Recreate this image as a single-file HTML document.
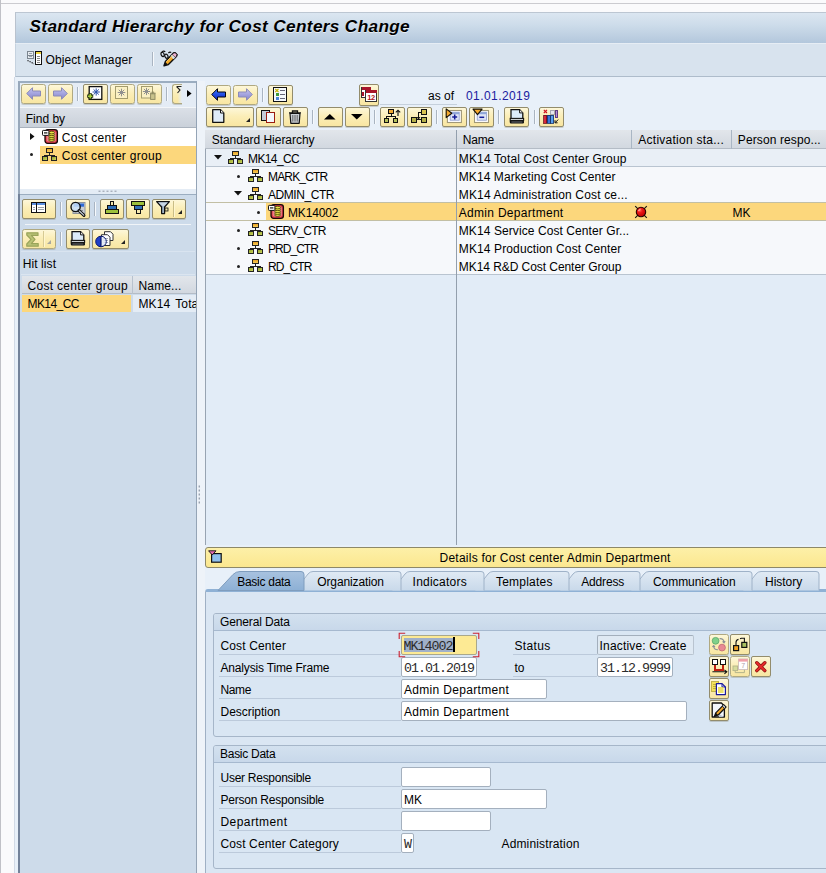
<!DOCTYPE html>
<html>
<head>
<meta charset="utf-8">
<title>Standard Hierarchy for Cost Centers Change</title>
<style>
*{box-sizing:border-box;margin:0;padding:0}
html,body{width:826px;height:873px;overflow:hidden;background:#fafafc}
body{position:relative;font-family:"Liberation Sans",sans-serif;font-size:12px;color:#000;line-height:18px}
.abs{position:absolute}
svg{position:absolute;overflow:visible}
#topline{left:0;top:3px;width:826px;height:1px;background:#cbcbd0}
#leftline{left:0;top:0;width:1px;height:873px;background:#c0c1c7}
#title{left:15px;top:12px;width:811px;height:31px;background:linear-gradient(#dbe6f1 0,#cddcea 40%,#b3c7dc 100%);border-top:1px solid #bcc6d2;border-left:1px solid #b9c2ce}
#title span{position:absolute;left:13.5px;top:3px;font:italic bold 17.2px "Liberation Sans",sans-serif;letter-spacing:.35px;line-height:20px;white-space:nowrap;text-shadow:0 1px 0 rgba(255,255,255,.6)}
#apptb{left:15px;top:43px;width:811px;height:34px;background:#d8e3ee;border-top:1px solid #e6edf4;border-left:1px solid #c5d2df;border-bottom:1px solid #aebccb}
#main{left:14px;top:77px;width:812px;height:796px;background:#e8f0f9;border-left:1px solid #d2dae6}
.btn{position:absolute;border:1px solid #b0a981;border-radius:2.5px;background:linear-gradient(#fdf7d9 0,#fbeeb8 45%,#f8e6a2 100%);box-shadow:0 1px 0 rgba(120,120,100,.3)}
.btn.on{border-color:#938c6c;border-radius:2px}
.sep{position:absolute;width:1px;height:14px;background:#a9b4c1;box-shadow:1px 0 0 #f6f9fc}
.t{position:absolute;white-space:nowrap}
.hl{background:#fcd77c}
.hdr{position:absolute;background:linear-gradient(#e2e6eb,#d2d8e0);border-bottom:1px solid #b4bcc6}
.lbl{position:absolute;white-space:nowrap;height:20px;line-height:23px;border-bottom:1px solid #bccadb;padding-left:1.5px}
.inp{position:absolute;height:20px;line-height:21px;border:1px solid #a4b0be;border-radius:2px;background:#fff;padding-left:2px;white-space:nowrap;overflow:hidden}
.mono{font-family:"Liberation Mono",monospace;font-size:13.3px;letter-spacing:-.98px;color:#2b2b2b}
.tab{position:absolute;top:573px;height:19px;line-height:19px;white-space:nowrap}
</style>
</head>
<body>
<svg width="0" height="0" style="left:0;top:0"><defs><linearGradient id="hgA" x1="0" y1="0" x2="0" y2="1"><stop offset="0" stop-color="#e89a1c"/><stop offset="1" stop-color="#f8d460"/></linearGradient><linearGradient id="hgB" x1="0" y1="0" x2="1" y2="1"><stop offset="0" stop-color="#8ea024"/><stop offset="1" stop-color="#d4dc68"/></linearGradient></defs></svg>
<div id="topline" class="abs"></div><div id="leftline" class="abs"></div>
<div id="title" class="abs"><span>Standard Hierarchy for Cost Centers Change</span></div>
<div id="apptb" class="abs"></div>
<div id="main" class="abs"></div>
<svg style="left:27px;top:51px" width="16" height="14" viewBox="0 0 16 14" ><g shape-rendering="crispEdges"><rect x="0.5" y="0.5" width="6" height="7" fill="#e6ebf0" stroke="#7c8690"/><path d="M0.5 4h6" stroke="#7c8690"/><path d="M2 2.2h3M2 5.8h3" stroke="#9aa3ad"/><rect x="8.5" y="0.5" width="6" height="13" fill="#fff" stroke="#111" stroke-width="1.2"/><rect x="9.2" y="1.2" width="4.6" height="2" fill="#f2d742"/><path d="M10 5.5h3M10 7.5h3M10 9.5h3M10 11.5h3" stroke="#888"/></g><path d="M0.5 9.5L7 12.8" stroke="#111" stroke-width="1.2" stroke-dasharray="1.2 1.1"/></svg>
<span class="t" style="left:45.5px;top:51px;letter-spacing:0.101px;">Object Manager</span>
<div class="sep" style="left:152px;top:52px"></div>
<svg style="left:160px;top:50px" width="18" height="17" viewBox="0 0 18 17" ><g fill="none" stroke="#111" stroke-width="1.2"><ellipse cx="2.6" cy="4.4" rx="1.5" ry="2.2" transform="rotate(-25 2.6 4.4)"/><ellipse cx="6.4" cy="6.2" rx="1.5" ry="2.2" transform="rotate(-25 6.4 6.2)"/><path d="M2 2.4C2.6 .8 4.2 .6 5.2 1.8M8.4 3C9.2 2.2 10.4 2 11.2 2.6"/></g><path d="M4 15.8L5.4 11.4L13.4 3L15.2 2.6L17 4.6L16.6 6.2L8.4 14.6Z" fill="#f4aa28" stroke="#111" stroke-width="1.4" stroke-linejoin="round"/><path d="M12 4.6L13.4 3L15.2 2.6L17 4.6L16.6 6.2L15.2 7.6Z" fill="#eab0d0" stroke="#111" stroke-width="1"/><path d="M10.4 6.2L12 4.6L15.2 7.6L13.6 9.2Z" fill="#d4dde6"/><path d="M6.4 11.8L12.6 5.6" stroke="#fbd070" stroke-width="1"/><path d="M4 15.8L5.2 12L8 14.6Z" fill="#111"/></svg>
<div class="abs" style="left:18px;top:81px;width:179px;height:792px;border:1px solid #94a4b6;border-left:2px solid #98a8bb;border-bottom:0;border-top:2px solid #9badc0;background:#e4ecf5"></div>
<div class="btn " style="left:21px;top:84px;width:25px;height:20px;"></div>
<div class="btn " style="left:48px;top:84px;width:25px;height:20px;"></div>
<svg style="left:25.5px;top:87.3px" width="15" height="13" viewBox="0 0 15 13" ><defs><linearGradient id="gl1" x1="0" y1="0" x2="0" y2="1"><stop offset="0" stop-color="#c4c4f0"/><stop offset="1" stop-color="#8484cc"/></linearGradient></defs><path d="M0.7 6.5 L6.5 0.7 L6.5 4 L14.5 4 L14.5 9 L6.5 9 L6.5 12.3 Z" fill="url(#gl1)" stroke="#8a8ab8" stroke-width="1" stroke-linejoin="round"/></svg>
<svg style="left:52.5px;top:87.3px" width="15" height="13" viewBox="0 0 15 13" ><defs><linearGradient id="gl2" x1="0" y1="0" x2="0" y2="1"><stop offset="0" stop-color="#c4c4f0"/><stop offset="1" stop-color="#8484cc"/></linearGradient></defs><path d="M14.3 6.5 L8.5 0.7 L8.5 4 L0.5 4 L0.5 9 L8.5 9 L8.5 12.3 Z" fill="url(#gl2)" stroke="#8a8ab8" stroke-width="1" stroke-linejoin="round"/></svg>
<div class="sep" style="left:77px;top:87px"></div>
<div class="btn on" style="left:83px;top:84px;width:25px;height:20px;"></div>
<div class="btn " style="left:110px;top:84px;width:25px;height:20px;"></div>
<div class="btn " style="left:137px;top:84px;width:25px;height:20px;"></div>
<div class="sep" style="left:166px;top:87px"></div>
<div class="btn " style="left:172px;top:84px;width:10px;height:20px;border-right:0;border-radius:3px 0 0 3px;background:linear-gradient(90deg,rgba(255,255,255,0) 50%,#e4ecf5 100%),linear-gradient(#fdf7d9 0,#fbeeb8 45%,#f8e6a2 100%)"></div>
<svg style="left:176px;top:86px" width="6" height="8" viewBox="0 0 6 8" ><path d="M0.5 0.5h5M0.5 0.5L4 4L1.5 7" fill="none" stroke="#222" stroke-width="1.1"/></svg>
<svg style="left:187px;top:90.3px" width="4.6" height="7" viewBox="0 0 4.6 7" ><path d="M0 0L4.6 3.5L0 7Z" fill="#000"/></svg>
<svg style="left:87px;top:86px" width="16" height="14" viewBox="0 0 16 14" ><rect x="2.2" y="0.6" width="12.6" height="12.8" fill="#fff" stroke="#111" stroke-width="1.3"/><path d="M9.2 2.4V9.6M5.6 6H12.799999999999999M6.607999999999999 3.408L11.792 8.592M11.792 3.408L6.607999999999999 8.592" stroke="#2a4fa8" stroke-width="1" fill="none"/><path d="M3.2 7.2V13.2M0.2 10.2H6.2" stroke="#1c2a08" stroke-width="3.2"/><path d="M3.2 8V12.4M1 10.2H5.4" stroke="#a6cf3a" stroke-width="1.5"/></svg>
<svg style="left:115px;top:86px" width="13" height="13" viewBox="0 0 13 13" ><rect x="0.5" y="0.5" width="12" height="12" fill="#fbf1c4" stroke="#a39c6e" stroke-width="1"/><path d="M6.5 2.7V10.3M2.7 6.5H10.3M3.7640000000000002 3.7640000000000002L9.236 9.236M9.236 3.7640000000000002L3.7640000000000002 9.236" stroke="#8f8f8f" stroke-width="1" fill="none"/></svg>
<svg style="left:141px;top:86px" width="15" height="14" viewBox="0 0 15 14" ><rect x="0.5" y="0.5" width="11" height="11.5" fill="#fbf1c4" stroke="#a39c6e" stroke-width="1"/><path d="M5.5 1.9V9.1M1.9 5.5H9.1M2.908 2.908L8.092 8.092M8.092 2.908L2.908 8.092" stroke="#8f8f8f" stroke-width="1" fill="none"/><path d="M9 7.2h5.6M10.5 6.2h2.6" stroke="#8a875f" stroke-width="1"/><rect x="9.6" y="7.8" width="4.4" height="5.6" fill="#c9c38c" stroke="#8a875f" stroke-width=".9"/></svg>
<div class="abs" style="left:20px;top:107px;width:176px;height:1px;background:#f3f6f9"></div>
<div class="hdr" style="left:20px;top:108px;width:176px;height:20px;background:linear-gradient(#dbe0e7,#cad1da);border-bottom:1px solid #a9b2bd"></div>
<span class="t" style="left:25.8px;top:110px;letter-spacing:-0.010px;">Find by</span>
<div class="abs" style="left:20px;top:128px;width:176px;height:61px;background:#fff"></div>
<div class="abs hl" style="left:40px;top:146px;width:156px;height:18px;"></div>
<svg style="left:29.8px;top:133px" width="4.5" height="7" viewBox="0 0 4.5 7" ><path d="M0 0L4.5 3.5L0 7Z" fill="#111"/></svg>
<svg style="left:42px;top:129px" width="16" height="15" viewBox="0 0 16 15" ><rect x="3" y="0.7" width="12.4" height="13.6" rx="2.6" fill="#e03a48" stroke="#1a0808" stroke-width="1.3"/><rect x="4.6" y="2.4" width="9.2" height="10.2" rx="1.6" fill="#f7b0b8" opacity=".6"/><g fill="#ece54a" stroke="#4a4000" stroke-width=".8"><ellipse cx="9.6" cy="11" rx="2.9" ry="1.3"/><ellipse cx="9.6" cy="9.1" rx="2.9" ry="1.3"/><ellipse cx="9.6" cy="7.2" rx="2.9" ry="1.3"/><ellipse cx="9.6" cy="5.3" rx="2.9" ry="1.3"/><ellipse cx="9.6" cy="3.6" rx="2.9" ry="1.3"/></g><rect x="0.5" y="1.4" width="6.4" height="5" rx=".8" fill="#fff" stroke="#111" stroke-width="1"/><path d="M2 3.9h3.4" stroke="#111" stroke-width="1.2"/></svg>
<span class="t" style="left:61.7px;top:129px;letter-spacing:0.314px;">Cost center</span>
<svg style="left:30px;top:153px" width="3" height="3" viewBox="0 0 3 3" ><circle cx="1.5" cy="1.5" r="1.5" fill="#222"/></svg>
<svg style="left:42px;top:147.6px" width="15" height="13" viewBox="0 0 15 13" ><g shape-rendering="crispEdges"><path d="M7.5 4v3M2.5 9V7h10v2" fill="none" stroke="#222"/><rect x="4.5" y="0.5" width="6" height="4" fill="url(#hgA)" stroke="#222"/><rect x="0.5" y="8.5" width="5" height="4" fill="url(#hgB)" stroke="#222"/><rect x="9.5" y="8.5" width="5" height="4" fill="url(#hgB)" stroke="#222"/></g></svg>
<span class="t" style="left:61.7px;top:147px;letter-spacing:0.282px;">Cost center group</span>
<svg style="left:98px;top:190px" width="20" height="3" viewBox="0 0 20 3" ><rect x="0.5" y="0.6" width="2" height="1.3" fill="#a2aab6"/><rect x="4.5" y="0.6" width="2" height="1.3" fill="#a2aab6"/><rect x="8.5" y="0.6" width="2" height="1.3" fill="#a2aab6"/><rect x="12.5" y="0.6" width="2" height="1.3" fill="#a2aab6"/><rect x="16.5" y="0.6" width="2" height="1.3" fill="#a2aab6"/></svg>
<div class="abs" style="left:18px;top:194px;width:2px;height:679px;background:#73829a"></div>
<div class="abs" style="left:20px;top:194px;width:176px;height:679px;background:#cddbea;border-top:1px solid #9badc0"></div>
<div class="abs" style="left:21px;top:251px;width:174px;height:1px;background:#d9e4f0"></div>
<div class="abs" style="left:21px;top:274px;width:174px;height:1px;background:#dbe5f0"></div>
<div class="btn on" style="left:22px;top:199px;width:34px;height:20px;"></div>
<div class="sep" style="left:60px;top:202px"></div>
<div class="btn on" style="left:66px;top:199px;width:24px;height:20px;"></div>
<div class="sep" style="left:94px;top:202px"></div>
<div class="btn on" style="left:100px;top:199px;width:24px;height:20px;"></div>
<div class="btn on" style="left:126px;top:199px;width:24px;height:20px;"></div>
<div class="btn on" style="left:152px;top:199px;width:34px;height:20px;"></div>
<div class="abs" style="left:25px;top:224px;width:166px;height:1px;background:#f0f4f8"></div>
<div class="btn " style="left:22px;top:229px;width:34px;height:20px;"></div>
<div class="sep" style="left:60px;top:232px"></div>
<div class="btn on" style="left:66px;top:229px;width:24px;height:20px;"></div>
<div class="btn on" style="left:92px;top:229px;width:37px;height:20px;"></div>
<svg style="left:31px;top:202px" width="15" height="11" viewBox="0 0 15 11" ><g shape-rendering="crispEdges"><rect x="0.5" y="0.5" width="14" height="10" fill="#fff" stroke="#111" stroke-width="1.2"/><rect x="1.2" y="1.2" width="12.6" height="1.8" fill="#5b8fe0"/><path d="M5.5 1v9" stroke="#111"/><path d="M2 5.5h2M2 7.5h2M7 5.5h6M7 7.5h6" stroke="#9aa0a8"/></g></svg>
<svg style="left:69px;top:201px" width="18" height="16" viewBox="0 0 18 16" ><rect x="4" y="1.5" width="12" height="11" fill="#c9ced4" stroke="#8c939b" stroke-width="1"/><rect x="5" y="2.5" width="10" height="3.2" fill="#2d6ad8"/><path d="M5 9.5h9" stroke="#8c939b"/><circle cx="6.6" cy="6" r="4.6" fill="#cfe6fb" fill-opacity=".8" stroke="#111" stroke-width="1.4"/><path d="M10 9.6L15 14.4" stroke="#111" stroke-width="3" stroke-linecap="round"/><path d="M10.4 10L14.8 14.2" stroke="#c8d2dc" stroke-width="1.1" stroke-linecap="round"/></svg>
<svg style="left:105px;top:201px" width="14" height="13" viewBox="0 0 14 13" ><g shape-rendering="crispEdges" stroke="#111" stroke-width="1"><rect x="5.5" y="0.5" width="3" height="4" fill="#f6e9b0"/><rect x="2.5" y="4.5" width="9" height="4" fill="#2f6fb8"/><rect x="0.5" y="8.5" width="13" height="4" fill="#9cc03c"/></g></svg>
<svg style="left:131px;top:201px" width="14" height="13" viewBox="0 0 14 13" ><g shape-rendering="crispEdges" stroke="#111" stroke-width="1"><rect x="0.5" y="0.5" width="13" height="4" fill="#9cc03c"/><rect x="3.5" y="4.5" width="8" height="4" fill="#2f6fb8"/><rect x="5.5" y="8.5" width="4" height="4" fill="#f6e9b0"/></g></svg>
<svg style="left:156px;top:201px" width="15" height="14" viewBox="0 0 15 14" ><path d="M0.6 0.6H13.4L8.6 6V12.6H5.6V6Z" fill="#9fb3c8" stroke="#111" stroke-width="1.2" stroke-linejoin="round"/><path d="M2.4 1.6H11.6L7.4 5.6Z" fill="#c9d6e3"/><rect x="9" y="7" width="3" height="3" fill="#f4e7a4" stroke="#111" stroke-width=".8"/></svg>
<div class="abs" style="left:173px;top:201px;width:1px;height:16px;background:#c9bd86;box-shadow:1px 0 0 #fff6cf"></div>
<svg style="left:178px;top:210px" width="4" height="4" viewBox="0 0 4 4" ><path d="M4 0V4H0Z" fill="#222"/></svg>
<svg style="left:26px;top:231.5px" width="13" height="15" viewBox="0 0 13 15" ><path d="M0.8 0.8H12V3.4H5.4L9 7.4L5.4 11.6H12.2V14.2H0.8V12L5 7.4L0.8 3Z" fill="#b9c276" stroke="#9aa45a" stroke-width="1.2" stroke-linejoin="round"/></svg>
<div class="abs" style="left:43px;top:231px;width:1px;height:16px;background:#d6ca94;box-shadow:1px 0 0 #fff6cf"></div>
<svg style="left:47px;top:240px" width="4" height="4" viewBox="0 0 4 4" ><path d="M4 0V4H0Z" fill="#a8a8a0"/></svg>
<svg style="left:69px;top:231px" width="17" height="15" viewBox="0 0 17 15" ><path d="M3 9.5V0.7H11.6L14.8 3.9V9.5" fill="#dcebf9" stroke="#111" stroke-width="1.3"/><path d="M11.6 0.7V3.9H14.8" fill="#fff" stroke="#111" stroke-width="1"/><rect x="2.2" y="9.4" width="13.4" height="2" fill="#eef2f6" stroke="#111" stroke-width="1.1"/><rect x="1.8" y="11.4" width="14.2" height="3" rx=".8" fill="#111"/><path d="M3.4 13h11" stroke="#80868e" stroke-width=".8"/></svg>
<svg style="left:95px;top:231px" width="20" height="17" viewBox="0 0 20 17" ><path d="M9.5 0.7H15.5L18 3.2V9.5H9.5Z" fill="#fff" stroke="#333" stroke-width="1"/><path d="M6.5 3.7H12.5L15 6.2V14.5H6.5Z" fill="#fff" stroke="#333" stroke-width="1"/><path d="M8.5 7.5h4.5M8.5 9.5h4.5M8.5 11.5h4.5" stroke="#9aa0a8" stroke-width=".9"/><path d="M6 5.2A5.2 5.2 0 0 0 6 15.8Z" fill="#1f3fc8" stroke="#0a1a70" stroke-width="1"/><path d="M6 5.2A5.2 5.2 0 0 1 6 15.8Z" fill="#dfe8f6" fill-opacity=".85" stroke="#0a1a70" stroke-width="1"/></svg>
<svg style="left:121px;top:240px" width="4" height="4" viewBox="0 0 4 4" ><path d="M4 0V4H0Z" fill="#222"/></svg>
<span class="t" style="left:22.8px;top:255px;letter-spacing:0.075px;">Hit list</span>
<div class="hdr" style="left:22px;top:276px;width:174px;height:18px"></div>
<div class="abs" style="left:132px;top:276px;width:1px;height:18px;background:#b8c2ce"></div>
<span class="t" style="left:27.5px;top:277px;letter-spacing:0.301px;">Cost center group</span>
<span class="t" style="left:138.5px;top:277px;letter-spacing:0.147px;">Name...</span>
<div class="abs hl" style="left:22px;top:295px;width:109px;height:17px;"></div>
<div class="abs" style="left:133px;top:295px;width:63px;height:17px;background:#e4ecf5;overflow:hidden"><span class="t" style="left:5.5px;top:0;word-spacing:1.8px;letter-spacing:.1px">MK14 Total</span></div>
<span class="t" style="left:27.5px;top:295px;letter-spacing:-0.577px;">MK14_CC</span>
<div class="abs" style="left:197px;top:81px;width:8px;height:792px;background:#eef3f9"></div>
<svg style="left:198px;top:485px" width="3" height="20" viewBox="0 0 3 20" ><rect x="0.6" y="0.5" width="1.4" height="2" fill="#9aa4b2"/><rect x="0.6" y="4.5" width="1.4" height="2" fill="#9aa4b2"/><rect x="0.6" y="8.5" width="1.4" height="2" fill="#9aa4b2"/><rect x="0.6" y="12.5" width="1.4" height="2" fill="#9aa4b2"/><rect x="0.6" y="16.5" width="1.4" height="2" fill="#9aa4b2"/></svg>
<div class="btn " style="left:206px;top:85px;width:25px;height:20px;"></div>
<div class="btn " style="left:233px;top:85px;width:25px;height:20px;"></div>
<div class="sep" style="left:262px;top:88px"></div>
<div class="btn on" style="left:268px;top:85px;width:25px;height:20px;"></div>
<svg style="left:210.5px;top:88.3px" width="15" height="13" viewBox="0 0 15 13" ><defs><linearGradient id="gr1" x1="0" y1="0" x2="0" y2="1"><stop offset="0" stop-color="#3d7cff"/><stop offset="1" stop-color="#0a22c8"/></linearGradient></defs><path d="M0.7 6.5 L6.5 0.7 L6.5 4 L14.5 4 L14.5 9 L6.5 9 L6.5 12.3 Z" fill="url(#gr1)" stroke="#050510" stroke-width="1" stroke-linejoin="round"/></svg>
<svg style="left:237.5px;top:88.3px" width="15" height="13" viewBox="0 0 15 13" ><defs><linearGradient id="gr2" x1="0" y1="0" x2="0" y2="1"><stop offset="0" stop-color="#c4c4f0"/><stop offset="1" stop-color="#8484cc"/></linearGradient></defs><path d="M14.3 6.5 L8.5 0.7 L8.5 4 L0.5 4 L0.5 9 L8.5 9 L8.5 12.3 Z" fill="url(#gr2)" stroke="#8a8ab8" stroke-width="1" stroke-linejoin="round"/></svg>
<svg style="left:273px;top:87px" width="14" height="15" viewBox="0 0 14 15" ><g shape-rendering="crispEdges"><rect x="0.6" y="0.6" width="12.8" height="13.8" fill="#f4f8fc" stroke="#111" stroke-width="1.3"/><rect x="2.5" y="6" width="3" height="3" fill="#3f9a3a"/><rect x="2.5" y="10" width="3" height="3" fill="#4a86d8"/><path d="M7 3.5h5M7 7.5h5M7 11.5h5" stroke="#667"/></g><path d="M2.3 2L5.5 5M5.5 2L2.3 5" stroke="#c8b400" stroke-width="1.1"/></svg>
<div class="btn on" style="left:359px;top:84px;width:20px;height:22px;"></div>
<svg style="left:361px;top:86px" width="16" height="17" viewBox="0 0 16 17" ><g shape-rendering="crispEdges"><rect x="0.5" y="1.5" width="9" height="10" fill="#fff" stroke="#333" stroke-width="1"/><rect x="0.5" y="0.5" width="9" height="3.4" fill="#a8152a"/><path d="M2 6v4" stroke="#a8152a" stroke-width="1.2"/><rect x="4.5" y="4.5" width="11" height="11" fill="#fff" stroke="#333" stroke-width="1"/><rect x="4.5" y="3.5" width="11" height="3.6" fill="#a8152a"/></g><text x="10.1" y="14.2" font-family="Liberation Sans, sans-serif" font-size="7.5" font-weight="bold" fill="#b01020" text-anchor="middle" letter-spacing="-.4">12</text></svg>
<div class="abs" style="left:380px;top:104px;width:77px;height:1px;background:#c5d0dc"></div>
<span class="t" style="left:428px;top:87px;letter-spacing:0.021px;">as of</span>
<span class="t" style="left:466px;top:87px;letter-spacing:0.426px;color:#2020a0">01.01.2019</span>
<div class="btn on" style="left:206px;top:107px;width:48px;height:20px;"></div>
<div class="btn on" style="left:256px;top:107px;width:25px;height:20px;"></div>
<div class="btn on" style="left:283px;top:107px;width:25px;height:20px;"></div>
<div class="sep" style="left:312px;top:110px"></div>
<div class="btn on" style="left:318px;top:107px;width:25px;height:20px;"></div>
<div class="btn on" style="left:345px;top:107px;width:25px;height:20px;"></div>
<div class="sep" style="left:374px;top:110px"></div>
<div class="btn on" style="left:380px;top:107px;width:25px;height:20px;"></div>
<div class="btn on" style="left:407px;top:107px;width:25px;height:20px;"></div>
<div class="sep" style="left:436px;top:110px"></div>
<div class="btn on" style="left:442px;top:107px;width:25px;height:20px;"></div>
<div class="btn on" style="left:469px;top:107px;width:25px;height:20px;"></div>
<div class="sep" style="left:498px;top:110px"></div>
<div class="btn on" style="left:504px;top:107px;width:25px;height:20px;"></div>
<div class="sep" style="left:534px;top:110px"></div>
<div class="btn on" style="left:539px;top:107px;width:25px;height:20px;"></div>
<svg style="left:212px;top:109px" width="13" height="14" viewBox="0 0 13 14" ><path d="M0.7 0.7H8.5L11.8 4V13.3H0.7Z" fill="#dfecf9" stroke="#111" stroke-width="1.3" stroke-linejoin="round"/><path d="M8.5 0.7V4H11.8" fill="#fff" stroke="#111" stroke-width="1"/></svg>
<svg style="left:246px;top:118px" width="4" height="4" viewBox="0 0 4 4" ><path d="M4 0V4H0Z" fill="#222"/></svg>
<svg style="left:261px;top:110px" width="14" height="14" viewBox="0 0 14 14" ><g shape-rendering="crispEdges"><rect x="0.6" y="0.6" width="8" height="9.6" fill="#c4cbd8" stroke="#111" stroke-width="1.2"/><rect x="5.6" y="2.8" width="7.6" height="10" fill="#f4f7fc" stroke="#9a1c10" stroke-width="1.3"/></g></svg>
<svg style="left:288px;top:109.5px" width="14" height="14" viewBox="0 0 14 14" ><path d="M1 2.8H13M4.5 2.6V1H9.5V2.6" fill="none" stroke="#111" stroke-width="1.3"/><path d="M2 3.5H12L11.2 13.3H2.8Z" fill="#c9ced4" stroke="#111" stroke-width="1.2" stroke-linejoin="round"/><path d="M4.8 5v6.6M7 5v6.6M9.2 5v6.6" stroke="#555" stroke-width=".9"/></svg>
<svg style="left:324px;top:113.5px" width="11.6" height="5.6" viewBox="0 0 11.6 5.6" ><path d="M0 5.6L5.8 0L11.6 5.6Z" fill="#000"/></svg>
<svg style="left:351px;top:113.5px" width="11.6" height="5.6" viewBox="0 0 11.6 5.6" ><path d="M0 0L5.8 5.6L11.6 0Z" fill="#000"/></svg>
<svg style="left:384px;top:109px" width="17" height="14" viewBox="0 0 17 14" ><g shape-rendering="crispEdges"><path d="M7 5v2.5M2.5 9.5V7.5h9v2" fill="none" stroke="#111"/><rect x="4.5" y="0.5" width="5" height="4.4" fill="#f0a830" stroke="#111"/><rect x="0.5" y="9.5" width="4.4" height="4" fill="#b4c05a" stroke="#111"/><rect x="9.5" y="9.5" width="4.4" height="4" fill="#b4c05a" stroke="#111"/></g><path d="M14 7V1.2M11.8 3.4L14 1.2L16.2 3.4" fill="none" stroke="#111" stroke-width="1.1"/></svg>
<svg style="left:411px;top:109px" width="16" height="14" viewBox="0 0 16 14" ><g shape-rendering="crispEdges"><path d="M10 3.5H7.5V10.5M5 10.5h5" fill="none" stroke="#111"/><rect x="10.5" y="0.5" width="4.6" height="4.6" fill="#d9c24e" stroke="#111"/><rect x="0.5" y="8.5" width="4.6" height="4.6" fill="#b4b04a" stroke="#111"/><rect x="10.5" y="8.5" width="4.6" height="4.6" fill="#b4b04a" stroke="#111"/></g><path d="M6 8L7.5 10L9 8" fill="none" stroke="#111" stroke-width="1"/></svg>
<svg style="left:445px;top:108px" width="18" height="16" viewBox="0 0 18 16" ><rect x="2.4" y="2.5" width="14" height="12" fill="#fff" stroke="#a09878" stroke-width="1.1"/><rect x="5.2" y="4.2" width="9" height="8" fill="#dfe5f6" stroke="#8c9ccc" stroke-width=".8"/><rect x="5.2" y="4.2" width="9" height="2" fill="#8fa6d8"/><path d="M9.7 6.6v5M7.2 9.1h5" stroke="#141c96" stroke-width="1.5"/><path d="M1.2 0.9L6.8 5.2L1.2 9.6Z" fill="#f5aa2e" stroke="#151005" stroke-width="1.1" stroke-linejoin="round"/></svg>
<svg style="left:472px;top:108px" width="18" height="16" viewBox="0 0 18 16" ><rect x="2.5" y="2.5" width="14" height="12" fill="#fff" stroke="#a09878" stroke-width="1.1"/><rect x="5.2" y="4.2" width="9.2" height="8" fill="#dfe5f6" stroke="#8c9ccc" stroke-width=".8"/><rect x="5.2" y="4.2" width="9.2" height="2" fill="#8fa6d8"/><path d="M7.4 9.3h4.8" stroke="#141c96" stroke-width="1.5"/><path d="M1 1.1H10.1L5.5 6.7Z" fill="#f5aa2e" stroke="#151005" stroke-width="1.1" stroke-linejoin="round"/></svg>
<svg style="left:508px;top:109px" width="17" height="15" viewBox="0 0 17 15" ><path d="M3 9.5V0.7H11.6L14.8 3.9V9.5" fill="#dcebf9" stroke="#111" stroke-width="1.3"/><path d="M11.6 0.7V3.9H14.8" fill="#fff" stroke="#111" stroke-width="1"/><rect x="2.2" y="9.4" width="13.4" height="2" fill="#eef2f6" stroke="#111" stroke-width="1.1"/><rect x="1.8" y="11.4" width="14.2" height="3" rx=".8" fill="#111"/><path d="M3.4 13h11" stroke="#80868e" stroke-width=".8"/></svg>
<svg style="left:543px;top:108.5px" width="16" height="15" viewBox="0 0 16 15" ><g shape-rendering="crispEdges"><rect x="0.6" y="6" width="3" height="8" fill="#d8283c" stroke="#6a0c18" stroke-width=".8"/><rect x="4.2" y="6" width="3" height="8" fill="#3a74d8" stroke="#12306a" stroke-width=".8"/><rect x="7.8" y="6" width="3" height="8" fill="#5aa0ee" stroke="#12306a" stroke-width=".8"/><rect x="12" y="1" width="2.8" height="7.6" fill="#b48ad8" stroke="#4a2a6a" stroke-width=".8"/><rect x="7" y="1" width="4" height="4" fill="#e6e6ee" stroke="#8a8a96" stroke-width=".7"/></g><path d="M0.8 0.8L4 4M4 0.8L0.8 4" stroke="#d01020" stroke-width="1.1"/><path d="M15.2 10.6L12.2 13.6M12 11.2V13.8H14.6" fill="none" stroke="#111" stroke-width="1"/></svg>
<div class="abs" style="left:205px;top:130px;width:621px;height:415px;background:#e2ecf7;border-left:1px solid #98a4b2"></div>
<div class="hdr" style="left:205px;top:130px;width:621px;height:19px"></div>
<div class="abs" style="left:206px;top:149px;width:620px;height:18px;background:#e9eff6;border-bottom:1px solid #b9c4d0"></div>
<div class="abs" style="left:206px;top:167px;width:620px;height:108px;background:#f6f8fb;border-bottom:1px solid #b9c4d0"></div>
<div class="abs" style="left:206px;top:202px;width:620px;height:19px;border-top:1px solid #c2bfa4;border-bottom:1px solid #c2bfa4"></div>
<div class="abs hl" style="left:266px;top:203px;width:190px;height:17px;"></div>
<div class="abs hl" style="left:457px;top:203px;width:369px;height:17px;"></div>
<div class="abs" style="left:456px;top:130px;width:1px;height:415px;background:#939fad"></div>
<div class="abs" style="left:631px;top:130px;width:1px;height:19px;background:#a9b6c4"></div>
<div class="abs" style="left:731px;top:130px;width:1px;height:19px;background:#a9b6c4"></div>
<span class="t" style="left:211.7px;top:131px;letter-spacing:-0.029px;">Standard Hierarchy</span>
<span class="t" style="left:462.8px;top:131px;letter-spacing:-0.205px;">Name</span>
<span class="t" style="left:638.3px;top:131px;letter-spacing:0.258px;">Activation sta...</span>
<span class="t" style="left:737.8px;top:131px;letter-spacing:0.109px;">Person respo...</span>
<svg style="left:214px;top:155px" width="8" height="4.5" viewBox="0 0 8 4.5" ><path d="M0 0H8 L4 4.5 Z" fill="#111"/></svg>
<svg style="left:228px;top:150.5px" width="15" height="13" viewBox="0 0 15 13" ><g shape-rendering="crispEdges"><path d="M7.5 4v3M2.5 9V7h10v2" fill="none" stroke="#222"/><rect x="4.5" y="0.5" width="6" height="4" fill="url(#hgA)" stroke="#222"/><rect x="0.5" y="8.5" width="5" height="4" fill="url(#hgB)" stroke="#222"/><rect x="9.5" y="8.5" width="5" height="4" fill="url(#hgB)" stroke="#222"/></g></svg>
<span class="t" style="left:248px;top:150px;letter-spacing:-0.610px;">MK14_CC</span>
<span class="t" style="left:458.8px;top:150px;letter-spacing:0.139px;">MK14 Total Cost Center Group</span>
<svg style="left:236.5px;top:175px" width="3" height="3" viewBox="0 0 3 3" ><circle cx="1.5" cy="1.5" r="1.5" fill="#222"/></svg>
<svg style="left:248px;top:168.5px" width="15" height="13" viewBox="0 0 15 13" ><g shape-rendering="crispEdges"><path d="M7.5 4v3M2.5 9V7h10v2" fill="none" stroke="#222"/><rect x="4.5" y="0.5" width="6" height="4" fill="url(#hgA)" stroke="#222"/><rect x="0.5" y="8.5" width="5" height="4" fill="url(#hgB)" stroke="#222"/><rect x="9.5" y="8.5" width="5" height="4" fill="url(#hgB)" stroke="#222"/></g></svg>
<span class="t" style="left:268px;top:168px;letter-spacing:-0.831px;">MARK_CTR</span>
<span class="t" style="left:458.8px;top:168px;letter-spacing:0.079px;">MK14 Marketing Cost Center</span>
<svg style="left:234px;top:191px" width="8" height="4.5" viewBox="0 0 8 4.5" ><path d="M0 0H8 L4 4.5 Z" fill="#111"/></svg>
<svg style="left:248px;top:186.5px" width="15" height="13" viewBox="0 0 15 13" ><g shape-rendering="crispEdges"><path d="M7.5 4v3M2.5 9V7h10v2" fill="none" stroke="#222"/><rect x="4.5" y="0.5" width="6" height="4" fill="url(#hgA)" stroke="#222"/><rect x="0.5" y="8.5" width="5" height="4" fill="url(#hgB)" stroke="#222"/><rect x="9.5" y="8.5" width="5" height="4" fill="url(#hgB)" stroke="#222"/></g></svg>
<span class="t" style="left:268px;top:186px;letter-spacing:-0.439px;">ADMIN_CTR</span>
<span class="t" style="left:458.8px;top:186px;letter-spacing:0.159px;">MK14 Administration Cost ce...</span>
<svg style="left:256.5px;top:211px" width="3" height="3" viewBox="0 0 3 3" ><circle cx="1.5" cy="1.5" r="1.5" fill="#222"/></svg>
<svg style="left:268px;top:204px" width="16" height="15" viewBox="0 0 16 15" ><rect x="3" y="0.7" width="12.4" height="13.6" rx="2.6" fill="#e03a48" stroke="#1a0808" stroke-width="1.3"/><rect x="4.6" y="2.4" width="9.2" height="10.2" rx="1.6" fill="#f7b0b8" opacity=".6"/><g fill="#ece54a" stroke="#4a4000" stroke-width=".8"><ellipse cx="9.6" cy="11" rx="2.9" ry="1.3"/><ellipse cx="9.6" cy="9.1" rx="2.9" ry="1.3"/><ellipse cx="9.6" cy="7.2" rx="2.9" ry="1.3"/><ellipse cx="9.6" cy="5.3" rx="2.9" ry="1.3"/><ellipse cx="9.6" cy="3.6" rx="2.9" ry="1.3"/></g><rect x="0.5" y="1.4" width="6.4" height="5" rx=".8" fill="#fff" stroke="#111" stroke-width="1"/><path d="M2 3.9h3.4" stroke="#111" stroke-width="1.2"/></svg>
<span class="t" style="left:288px;top:204px;letter-spacing:-0.146px;">MK14002</span>
<span class="t" style="left:458.8px;top:204px;letter-spacing:0.290px;">Admin Department</span>
<svg style="left:236.5px;top:229px" width="3" height="3" viewBox="0 0 3 3" ><circle cx="1.5" cy="1.5" r="1.5" fill="#222"/></svg>
<svg style="left:248px;top:222.5px" width="15" height="13" viewBox="0 0 15 13" ><g shape-rendering="crispEdges"><path d="M7.5 4v3M2.5 9V7h10v2" fill="none" stroke="#222"/><rect x="4.5" y="0.5" width="6" height="4" fill="url(#hgA)" stroke="#222"/><rect x="0.5" y="8.5" width="5" height="4" fill="url(#hgB)" stroke="#222"/><rect x="9.5" y="8.5" width="5" height="4" fill="url(#hgB)" stroke="#222"/></g></svg>
<span class="t" style="left:268px;top:222px;letter-spacing:-0.757px;">SERV_CTR</span>
<span class="t" style="left:458.8px;top:222px;letter-spacing:0.081px;">MK14 Service Cost Center Gr...</span>
<svg style="left:236.5px;top:247px" width="3" height="3" viewBox="0 0 3 3" ><circle cx="1.5" cy="1.5" r="1.5" fill="#222"/></svg>
<svg style="left:248px;top:240.5px" width="15" height="13" viewBox="0 0 15 13" ><g shape-rendering="crispEdges"><path d="M7.5 4v3M2.5 9V7h10v2" fill="none" stroke="#222"/><rect x="4.5" y="0.5" width="6" height="4" fill="url(#hgA)" stroke="#222"/><rect x="0.5" y="8.5" width="5" height="4" fill="url(#hgB)" stroke="#222"/><rect x="9.5" y="8.5" width="5" height="4" fill="url(#hgB)" stroke="#222"/></g></svg>
<span class="t" style="left:268px;top:240px;letter-spacing:-0.962px;">PRD_CTR</span>
<span class="t" style="left:458.8px;top:240px;letter-spacing:0.118px;">MK14 Production Cost Center</span>
<svg style="left:236.5px;top:265px" width="3" height="3" viewBox="0 0 3 3" ><circle cx="1.5" cy="1.5" r="1.5" fill="#222"/></svg>
<svg style="left:248px;top:258.5px" width="15" height="13" viewBox="0 0 15 13" ><g shape-rendering="crispEdges"><path d="M7.5 4v3M2.5 9V7h10v2" fill="none" stroke="#222"/><rect x="4.5" y="0.5" width="6" height="4" fill="url(#hgA)" stroke="#222"/><rect x="0.5" y="8.5" width="5" height="4" fill="url(#hgB)" stroke="#222"/><rect x="9.5" y="8.5" width="5" height="4" fill="url(#hgB)" stroke="#222"/></g></svg>
<span class="t" style="left:268px;top:258px;letter-spacing:-0.854px;">RD_CTR</span>
<span class="t" style="left:458.8px;top:258px;letter-spacing:-0.062px;">MK14 R&amp;D Cost Center Group</span>
<span class="t" style="left:732.5px;top:204px;">MK</span>
<svg style="left:634px;top:205px" width="14" height="14" viewBox="0 0 14 14" ><path d="M1.2 1.2L12.8 12.8M12.8 1.2L1.2 12.8" stroke="#111" stroke-width="1.1"/><defs><radialGradient id="rb" cx=".38" cy=".32" r=".7"><stop offset="0" stop-color="#ff6a5a"/><stop offset=".35" stop-color="#f01818"/><stop offset="1" stop-color="#b80000"/></radialGradient></defs><circle cx="7" cy="7" r="4.7" fill="url(#rb)" stroke="#2a0000" stroke-width="1.1"/><path d="M4.6 5.6L6.2 4.4" stroke="#ffd0d0" stroke-width="1" stroke-linecap="round"/></svg>
<div class="abs" style="left:205px;top:546.5px;width:625px;height:21.5px;border:1px solid #8d8868;border-radius:3px;background:linear-gradient(#fdf0a8,#fbe78f)"></div>
<svg style="left:208px;top:550px" width="14" height="13" viewBox="0 0 14 13" ><rect x="3.6" y="3.6" width="9.6" height="8.6" fill="#8fc0ee" stroke="#111" stroke-width="1.2"/><path d="M0.6 0.8H8L4.2 5Z" fill="#e46ab0" stroke="#111" stroke-width=".9"/></svg>
<span class="t" style="left:439.5px;top:549px;letter-spacing:0.243px;">Details for Cost center Admin Department</span>
<div class="abs" style="left:205px;top:589px;width:621px;height:284px;background:#dae6f3;border-left:1px solid #9fb0c4;border-top:3px solid #8fb1d5;border-radius:3px 0 0 0"></div>
<svg style="left:0;top:0" width="826" height="873" viewBox="0 0 826 873"><defs><linearGradient id="ta" x1="0" y1="0" x2="0" y2="1"><stop offset="0" stop-color="#a8c2df"/><stop offset="1" stop-color="#8db0d5"/></linearGradient><linearGradient id="ti" x1="0" y1="0" x2="0" y2="1"><stop offset="0" stop-color="#e0eaf4"/><stop offset="1" stop-color="#c9d9ea"/></linearGradient></defs>
<path d="M743 590.5L756 574Q758 571.5 761 571.5H816Q819 571.5 819 574V590.5" fill="url(#ti)" stroke="#9fb2c8" stroke-width="1"/>
<path d="M631 590.5L644 574Q646 571.5 649 571.5H749Q752 571.5 752 574V590.5" fill="url(#ti)" stroke="#9fb2c8" stroke-width="1"/>
<path d="M560 590.5L573 574Q575 571.5 578 571.5H637Q640 571.5 640 574V590.5" fill="url(#ti)" stroke="#9fb2c8" stroke-width="1"/>
<path d="M475 590.5L488 574Q490 571.5 493 571.5H566Q569 571.5 569 574V590.5" fill="url(#ti)" stroke="#9fb2c8" stroke-width="1"/>
<path d="M392 590.5L405 574Q407 571.5 410 571.5H481Q484 571.5 484 574V590.5" fill="url(#ti)" stroke="#9fb2c8" stroke-width="1"/>
<path d="M295 590.5L308 574Q310 571.5 313 571.5H398Q401 571.5 401 574V590.5" fill="url(#ti)" stroke="#9fb2c8" stroke-width="1"/>
<path d="M218 590.5L233 574.5Q236 571.5 240 571.5H301Q304 571.5 304 574.5V590.5Z" fill="url(#ta)" stroke="#7f9dbe" stroke-width="1"/>
</svg>
<span class="tab" style="left:237.2px;letter-spacing:-0.272px;">Basic data</span>
<span class="tab" style="left:317.3px;letter-spacing:-0.132px;">Organization</span>
<span class="tab" style="left:412.6px;letter-spacing:0.230px;">Indicators</span>
<span class="tab" style="left:496px;letter-spacing:0.212px;">Templates</span>
<span class="tab" style="left:581.2px;letter-spacing:-0.155px;">Address</span>
<span class="tab" style="left:653px;letter-spacing:-0.065px;">Communication</span>
<span class="tab" style="left:765px;letter-spacing:-0.024px;">History</span>
<div class="abs" style="left:213px;top:613px;width:620px;height:124px;border:1px solid #a6b6c9;border-radius:3px 0 0 3px;background:#d9e6f3"></div>
<div class="abs" style="left:214px;top:614px;width:619px;height:17px;background:linear-gradient(#d3e1ef,#c8d8ea);border-bottom:1px solid #a6b9cf;border-radius:2px 0 0 0"></div>
<span class="t" style="left:220px;top:613px;letter-spacing:-0.134px;">General Data</span>
<span class="lbl" style="left:219px;top:635px;width:182px;letter-spacing:0.137px;">Cost Center</span>
<span class="lbl" style="left:219px;top:657px;width:182px;letter-spacing:-0.174px;">Analysis Time Frame</span>
<span class="lbl" style="left:219px;top:679px;width:182px;letter-spacing:-0.372px;">Name</span>
<span class="lbl" style="left:219px;top:701px;width:182px;letter-spacing:-0.023px;">Description</span>
<span class="lbl" style="left:513px;top:635px;width:84px;letter-spacing:0.354px;">Status</span>
<span class="lbl" style="left:513px;top:657px;width:84px;">to</span>
<div class="inp mono" style="left:401px;top:635px;width:76px;background:#fdea94;border-color:#a9a88c;padding-left:1.5px"><i style="position:absolute;left:1.5px;top:1.5px;width:49.2px;height:14px;background:#a0b0c8"></i><span style="position:relative">MK14002</span></div>
<div class="inp mono" style="left:401px;top:657px;width:76px;">01.01.2019</div>
<div class="inp " style="left:401px;top:679px;width:146px;letter-spacing:0.317px;">Admin Department</div>
<div class="inp " style="left:401px;top:701px;width:286px;letter-spacing:0.317px;">Admin Department</div>
<div class="inp " style="left:597px;top:635px;width:97px;letter-spacing:0.184px;background:#dfe9f3;border-color:#a3afbc #b9c4d0 #b9c4d0 #a3afbc;padding-left:1.5px">Inactive: Create</div>
<div class="inp mono" style="left:597px;top:657px;width:76px;">31.12.9999</div>
<svg style="left:398px;top:632px" width="82" height="26" viewBox="0 0 82 26" ><path d="M1.2 7V1.3H7.2M74.8 1.3H80.8V7M80.8 19V24.7H74.8M7.2 24.7H1.2V19" fill="none" stroke="#cc2230" stroke-width="1.1"/></svg>
<div class="abs" style="left:453.3px;top:637px;width:1.5px;height:15px;background:#000"></div>
<div class="btn " style="left:709px;top:634px;width:20px;height:21px;"></div>
<div class="btn on" style="left:730px;top:634px;width:20px;height:21px;"></div>
<div class="btn on" style="left:709px;top:656px;width:20px;height:21px;"></div>
<div class="btn " style="left:730px;top:656px;width:20px;height:21px;"></div>
<div class="btn on" style="left:751px;top:656px;width:20px;height:21px;"></div>
<div class="btn on" style="left:709px;top:678px;width:20px;height:21px;"></div>
<div class="btn on" style="left:709px;top:700px;width:20px;height:21px;"></div>
<svg style="left:711px;top:636px" width="16" height="17" viewBox="0 0 16 17" ><circle cx="4.6" cy="4.8" r="3.4" fill="#7fd08a" stroke="#5aa868" stroke-width=".8"/><circle cx="11" cy="11.6" r="3.4" fill="#e88a94" stroke="#c06a74" stroke-width=".8"/><path d="M8.6 2.6C11.4 2.4 13 4 13 6.4M11.6 5.4L13 6.8L14.2 5.2M7 13.8C4.2 14 2.6 12.4 2.6 10M1.4 11L2.6 9.6L4 11" fill="none" stroke="#8a9096" stroke-width="1.1"/></svg>
<svg style="left:732px;top:636px" width="16" height="17" viewBox="0 0 16 17" ><path d="M4 9V6.5Q4 3.8 6.5 3.4M8 2.8L9.4 2.2H12.4V6" fill="none" stroke="#111" stroke-width="1.1"/><rect x="1.6" y="9.6" width="5" height="5" fill="#f0a020" stroke="#111" stroke-width="1.2"/><rect x="9.8" y="6.4" width="5" height="5" fill="#a8c060" stroke="#111" stroke-width="1.2"/></svg>
<svg style="left:711px;top:658px" width="17" height="17" viewBox="0 0 17 17" ><g shape-rendering="crispEdges"><rect x="1.6" y="1.6" width="5" height="5" fill="#fff" stroke="#111" stroke-width="1.3"/><rect x="9.4" y="1.6" width="5" height="5" fill="#fff" stroke="#111" stroke-width="1.3"/><path d="M4 7.2V12M12 7.2V12" stroke="#c02010" stroke-width="1.2"/><path d="M3 11.8h10" stroke="#c02010" stroke-width="1.6"/></g><path d="M1.4 13.8H15.6M13.4 11.8L15.8 13.8L13.4 15.8" fill="none" stroke="#111" stroke-width="1.1"/></svg>
<svg style="left:732px;top:658px" width="17" height="17" viewBox="0 0 17 17" ><rect x="6.6" y="1" width="9" height="10.6" fill="#fff" stroke="#c8b8b8" stroke-width=".8"/><rect x="6.6" y="1" width="9" height="2.6" fill="#f0a0a8"/><rect x="1" y="8" width="4.6" height="4.6" fill="#d6dc9c" stroke="#b4b48a" stroke-width=".9"/><path d="M3.2 12.8V14.6H12.4V11.8" fill="none" stroke="#b4b48a" stroke-width="1"/><text x="11.2" y="10.2" font-family="Liberation Sans, sans-serif" font-size="7" fill="#b0a0a8" text-anchor="middle">7</text></svg>
<svg style="left:755px;top:661px" width="12" height="12" viewBox="0 0 12 12" ><path d="M1.8 1.8L9.8 9.6M9.8 1.8L1.8 9.6" stroke="#8a1010" stroke-width="3.4" stroke-linecap="round"/><path d="M1.8 1.8L9.8 9.6M9.8 1.8L1.8 9.6" stroke="#e62a2a" stroke-width="2" stroke-linecap="round"/></svg>
<svg style="left:711px;top:680px" width="16" height="16" viewBox="0 0 16 16" ><g shape-rendering="crispEdges"><rect x="0.6" y="1.6" width="7" height="9.4" fill="#f4e25a" stroke="#b4a430" stroke-width=".8"/><path d="M1.6 4h3M1.6 6h3M1.6 8h3" stroke="#b4a430" stroke-width=".8"/></g><path d="M5.4 3.6H11L14.4 7V14.6H5.4Z" fill="#fff" stroke="#1a1a9c" stroke-width="1.2" stroke-linejoin="round"/><path d="M11 3.6V7H14.4" fill="none" stroke="#1a1a9c" stroke-width="1"/><path d="M7 8h5.6M7 10h5.6M7 12h5.6" stroke="#e8d838" stroke-width="1.3"/></svg>
<svg style="left:711px;top:702px" width="16" height="17" viewBox="0 0 16 17" ><path d="M1.2 1H10.4L13.4 4V15H1.2Z" fill="#f2f6fb" stroke="#111" stroke-width="1.3" stroke-linejoin="round"/><path d="M8 12L13.2 15H8Z" fill="#b8c4d4"/><path d="M3.4 14.4L4.8 10.8L12.6 2.8L15 5L7.2 13Z" fill="#f2a82a" stroke="#111" stroke-width="1.2" stroke-linejoin="round"/><path d="M11.2 4.2L12.6 2.8L15 5L13.6 6.4Z" fill="#c8d0da" stroke="#111" stroke-width=".9"/><path d="M3.4 14.4L4.8 10.8L7.2 13Z" fill="#111"/></svg>
<div class="abs" style="left:213px;top:745px;width:620px;height:124px;border:1px solid #a6b6c9;border-radius:3px 0 0 3px;background:#d9e6f3"></div>
<div class="abs" style="left:214px;top:746px;width:619px;height:17px;background:linear-gradient(#d3e1ef,#c8d8ea);border-bottom:1px solid #a6b9cf;border-radius:2px 0 0 0"></div>
<span class="t" style="left:220px;top:745px;letter-spacing:-0.270px;">Basic Data</span>
<span class="lbl" style="left:219px;top:767px;width:182px;letter-spacing:-0.268px;">User Responsible</span>
<span class="lbl" style="left:219px;top:789px;width:182px;letter-spacing:-0.212px;">Person Responsible</span>
<span class="lbl" style="left:219px;top:811px;width:182px;letter-spacing:0.422px;">Department</span>
<span class="lbl" style="left:219px;top:833px;width:182px;letter-spacing:0.118px;">Cost Center Category</span>
<div class="inp " style="left:401px;top:767px;width:90px;"></div>
<div class="inp " style="left:401px;top:789px;width:146px;">MK</div>
<div class="inp " style="left:401px;top:811px;width:90px;"></div>
<div class="inp mono" style="left:401px;top:833px;width:13px;padding-left:2px">W</div>
<span class="t" style="left:501.5px;top:835px;letter-spacing:0.144px;">Administration</span>
</body>
</html>
